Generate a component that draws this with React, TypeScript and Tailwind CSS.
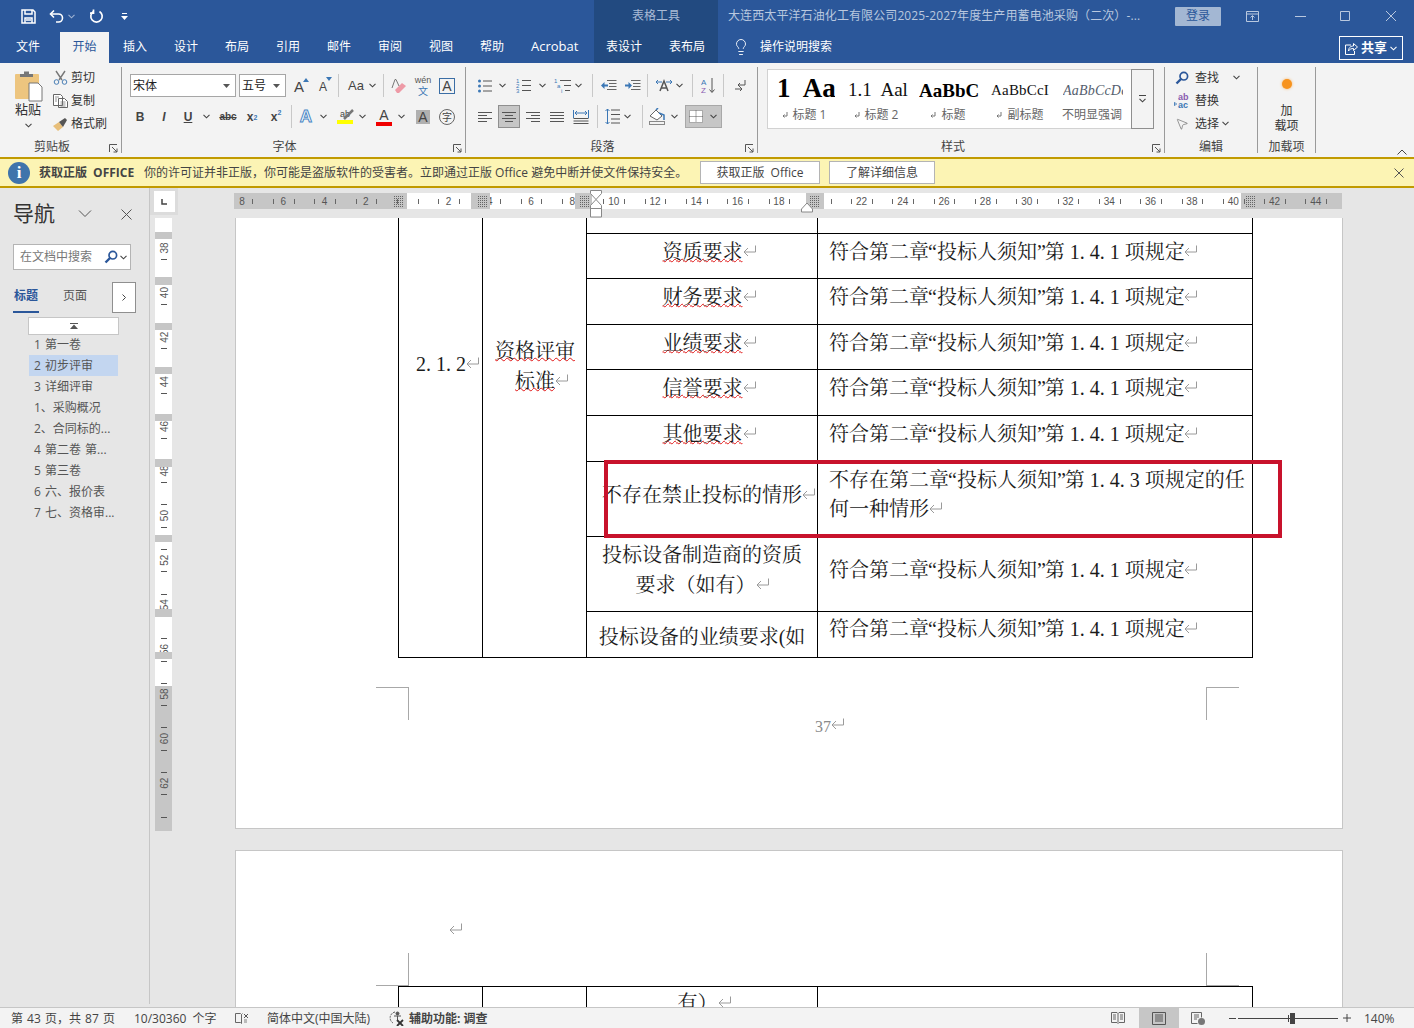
import React from "react";
import { Lightbulb, MousePointer2 } from "lucide-react";

const Chev = ({ c = "#444" }: { c?: string }) => (
  <svg width="7" height="5" viewBox="0 0 7 5" fill="none" stroke={c} strokeWidth="1.1"><path d="M.5 .8 3.500 3.800 6.500 .8" /></svg>
);
const Sep = ({ cls }: { cls: string }) => <div className={`w-px h-[23px] bg-[#c8c8c8] shrink-0 ${cls}`} />;
const Launcher = () => (
  <svg className="absolute right-[3px] bottom-[0px]" width="9" height="9" viewBox="0 0 9 9" fill="none" stroke="#555"><path d="M.5 8V.5H8M3 3l5 5M8 4.500V8H4.500" /></svg>
);
const Mark = ({ cls = "" }: { cls?: string }) => (
  <svg className={`inline-block shrink-0 align-[2px] ${cls}`} width="13" height="12" viewBox="0 0 13 12" fill="none" stroke="#9a9a9a"><path d="M12.500 .5v6.500H1M5 3 1 7l4 4" /></svg>
);
const LinesIcon = ({ w = 14, rows }: { w?: number; rows: [number, number][] }) => (
  <svg width={w} height="12" viewBox={`0 0 ${w} 12`} stroke="#555" strokeWidth="1">
    {rows.map(([a, b], i) => <path key={i} d={`M${a} ${1.5 + i * 3}H${b}`} />)}
  </svg>
);
const BulletIcon = () => (
  <svg width="15" height="14" viewBox="0 0 15 14"><g fill="#3b77b5"><circle cx="1.500" cy="2" r="1.500" /><circle cx="1.500" cy="7" r="1.500" /><circle cx="1.500" cy="12" r="1.500" /></g><path d="M5 2h9M5 7h9M5 12h9" stroke="#555" /></svg>
);
const NumIcon = () => (
  <svg width="16" height="15" viewBox="0 0 16 15"><g fill="#3b77b5" fontSize="6" fontFamily="Liberation Sans"><text x="0" y="5">1</text><text x="0" y="10">2</text><text x="0" y="15">3</text></g><path d="M6 2.500h9M6 7.500h9M6 12.500h9" stroke="#555" /></svg>
);
const MultiIcon = () => (
  <svg width="18" height="15" viewBox="0 0 18 15"><g fill="#3b77b5" fontSize="6" fontFamily="Liberation Sans"><text x="0" y="5">1</text><text x="3" y="10">a</text><text x="7" y="15">i</text></g><path d="M6 2.500h11M10 7.500h7M11 12.500h5" stroke="#555" /></svg>
);
const IndentIcon = ({ flip = false }: { flip?: boolean }) => (
  <svg width="17" height="13" viewBox="0 0 17 13"><path d="M7 1.500h9.500M9 4.500h7.500M9 7.500h7.500M7 10.500h9.500" stroke="#666" /><path d={flip ? "M1 5.500h3.500V3L8 6.500 4.500 10V7.500H1z" : "M8 5.500H4.500V3L1 6.500 4.500 10V7.500H8z"} fill="#3b77b5" /></svg>
);
const Magnifier = ({ size = 14 }: { size?: number }) => (
  <svg width={size} height={size} viewBox="0 0 14 14" fill="none"><circle cx="8.800" cy="5.200" r="3.800" stroke="#2b579a" strokeWidth="1.700" /><path d="M6 8 1.500 12.500" stroke="#2b579a" strokeWidth="2.400" /></svg>
);

function TitleBar() {
  return (
    <div className="h-[32px] flex items-center text-white">
      <svg className="ml-[21px]" width="15" height="15" viewBox="0 0 15 15" fill="none" stroke="#fff" strokeWidth="1.500"><path d="M1 1h11l2 2v11H1z" /><path d="M4 1v4h7V1M4 14V9h7v5" /><path d="M5 11h5" /></svg>
      <svg className="ml-[13px]" width="16" height="15" viewBox="0 0 16 15" fill="none" stroke="#fff" strokeWidth="1.600"><path d="M5 1.500 1.500 5 5 8.500" /><path d="M2 5h7.500a4 4 0 0 1 0 8H7" /></svg>
      <span className="ml-[3px]"><Chev c="#9fb3d3" /></span>
      <svg className="ml-[14px]" width="15" height="15" viewBox="0 0 15 15" fill="none" stroke="#fff" strokeWidth="1.700"><path d="M10.500 2.500a5.700 5.700 0 1 1-6 0" /><path d="M4.500 .5v3.600H1" /></svg>
      <svg className="ml-[17px]" width="7" height="7" viewBox="0 0 7 7" fill="#fff"><path d="M1 0h5v1H1zM0 3h7L3.500 7z" /></svg>
      <div className="ml-[466px] w-[124px] h-[32px] bg-[#224a80] flex items-center justify-center text-[12px] text-[#a9bbd6] pb-[1px]">表格工具</div>
      <div className="ml-[10px] w-[420px] text-[12px] text-[#b9c8df] whitespace-nowrap tracking-[0.1px]">大连西太平洋石油化工有限公司2025-2027年度生产用蓄电池采购（二次）-...</div>
      <div className="ml-[27px] w-[46px] h-[19px] bg-[#a3b7d3] rounded-[1px] text-[#2b579a] text-[12px] flex items-center justify-center">登录</div>
      <svg className="ml-[25px]" width="13" height="11" viewBox="0 0 13 11" fill="none" stroke="#b9c8df"><path d="M.5.5h12v10H.5zM.5 3h12M6.500 9V5M4.500 6.500 6.500 4.500l2 2" /></svg>
      <svg className="ml-[36px]" width="11" height="1" viewBox="0 0 11 1"><path d="M0 .5h11" stroke="#b9c8df" /></svg>
      <svg className="ml-[34px]" width="10" height="10" viewBox="0 0 10 10" fill="none" stroke="#b9c8df"><path d="M.5.5h9v9h-9z" /></svg>
      <svg className="ml-[36px]" width="10" height="10" viewBox="0 0 10 10" fill="none" stroke="#b9c8df"><path d="M0 0l10 10M10 0 0 10" /></svg>
    </div>
  );
}

function TabBar() {
  return (
    <div className="h-[31px] flex items-stretch text-white text-[12px]">
      <div className="ml-[16px] w-[24px] flex items-center pb-[1px]">文件</div>
      <div className="ml-[20px] w-[49px] bg-[#f3f3f3] text-[#2b579a] flex items-center justify-center pb-[1px]">开始</div>
      <div className="ml-[14px] w-[24px] flex items-center pb-[1px]">插入</div>
      <div className="ml-[27px] w-[24px] flex items-center pb-[1px]">设计</div>
      <div className="ml-[27px] w-[24px] flex items-center pb-[1px]">布局</div>
      <div className="ml-[27px] w-[24px] flex items-center pb-[1px]">引用</div>
      <div className="ml-[27px] w-[24px] flex items-center pb-[1px]">邮件</div>
      <div className="ml-[27px] w-[24px] flex items-center pb-[1px]">审阅</div>
      <div className="ml-[27px] w-[24px] flex items-center pb-[1px]">视图</div>
      <div className="ml-[27px] w-[24px] flex items-center pb-[1px]">帮助</div>
      <div className="ml-[27px] w-[46px] flex items-center text-[13px] pb-[1px]">Acrobat</div>
      <div className="ml-[17px] w-[124px] bg-[#224a80] flex items-center pb-[1px]">
        <span className="ml-[12px] w-[63px]">表设计</span><span>表布局</span>
      </div>
      <div className="ml-[14px] w-[20px] flex items-center pb-[1px]"><Lightbulb size={18} strokeWidth={1.2} /></div>
      <div className="ml-[8px] w-[580px] flex items-center pb-[1px]">操作说明搜索</div>
      <div className="-ml-[1px] w-[64px] h-[24px] mt-[4px] border border-white flex items-center justify-center gap-[3px] font-bold text-[13px]">
        <svg width="13" height="13" viewBox="0 0 13 13" fill="none" stroke="#fff"><path d="M6 3H.5v9.500h9V9M3.500 9c0-4 3-5 5-5V1.500l4 3.500-4 3.500V6.500c-2 0-4 .5-5 2.500z" /></svg>
        共享<Chev c="#fff" />
      </div>
    </div>
  );
}

function ClipRow({ icon, label }: { icon: React.ReactNode; label: string }) {
  return (
    <div className="h-[23px] flex items-center">
      <div className="w-[18px] flex justify-start">{icon}</div>
      <span className="text-[12px]">{label}</span>
    </div>
  );
}

function GroupLabel({ children }: { children: React.ReactNode }) {
  return <div className="h-[14px] leading-[16px] text-center text-[12px] text-[#444]">{children}</div>;
}

function Clipboard() {
  return (
    <div className="w-[122px] h-[86px] border-r border-[#9a9a9a] relative flex flex-col shrink-0">
      <div className="h-[72px] flex">
        <div className="ml-[8px] w-[40px] flex flex-col items-center">
          <svg className="mt-[3px]" width="29" height="32" viewBox="0 0 29 32"><rect x="1" y="4" width="24" height="25" rx="1" fill="#edc57f" /><path d="M6 7V4h4V1.500h5V4h4v3z" fill="#777" /><path d="M15 13h9l4 4v14H15z" fill="#fff" stroke="#777" /></svg>
          <span className="text-[13px] leading-[16px] mt-[-1px]">粘贴</span>
          <span className="mt-[6px]"><Chev /></span>
        </div>
        <div className="ml-[5px] mt-[-1px]">
          <ClipRow label="剪切" icon={<svg width="15" height="15" viewBox="0 0 15 15" fill="none"><path d="M3 1l6 9M12 1 6 10" stroke="#777" strokeWidth="1.400" /><circle cx="3.500" cy="12" r="2.300" stroke="#4a7fb5" /><circle cx="11.500" cy="12" r="2.300" stroke="#4a7fb5" /></svg>} />
          <ClipRow label="复制" icon={<svg width="15" height="14" viewBox="0 0 15 14" fill="#fff" stroke="#666"><path d="M.5.500h7l2 2v9h-9zM5.500 4.500h6l3 3v6h-9z" /><path d="M7.500 8h5M7.500 10h5M7.500 12h5M2 3h4M2 5h2M2 7h2" stroke="#777" strokeWidth=".8" /></svg>} />
          <ClipRow label="格式刷" icon={<svg width="16" height="14" viewBox="0 0 16 14"><path d="M0 9l6-4 4 5-5 4z" fill="#e8bf7a" /><path d="M6 5l6-4 2 2-4 7z" fill="#555" /></svg>} />
        </div>
      </div>
      <div className="pr-[17px]"><GroupLabel>剪贴板</GroupLabel></div>
      <Launcher />
    </div>
  );
}

const IBtn = ({ cls, children }: { cls: string; children: React.ReactNode }) => (
  <div className={`h-[23px] flex items-center justify-center shrink-0 ${cls}`}>{children}</div>
);

function FontGroup() {
  return (
    <div className="w-[344px] h-[86px] border-r border-[#9a9a9a] relative flex flex-col shrink-0">
      <div className="h-[72px] pt-[7px] text-[#444]">
        <div className="flex items-center h-[23px]">
          <div className="ml-[8px] w-[106px] h-[23px] bg-white border border-[#a6a6a6] flex items-center justify-between pl-[2px] pr-[5px] text-[12px] text-[#222]">宋体<svg width="7" height="4" viewBox="0 0 7 4" fill="#555"><path d="M0 0h7L3.500 4z" /></svg></div>
          <div className="ml-[3px] w-[47px] h-[23px] bg-white border border-[#a6a6a6] flex items-center justify-between pl-[2px] pr-[5px] text-[12px] text-[#222]">五号<svg width="7" height="4" viewBox="0 0 7 4" fill="#555"><path d="M0 0h7L3.500 4z" /></svg></div>
          <IBtn cls="ml-[1px] w-[24px] text-[14px] [font-family:'Liberation_Sans'] items-end"><span className="relative text-[15px] leading-[20px]">A<svg className="absolute -right-[5px] top-[1px]" width="6" height="4"><path d="M0 4h6L3 0z" fill="#3b77b5" /></svg></span></IBtn>
          <IBtn cls="w-[24px] [font-family:'Liberation_Sans']"><span className="relative text-[12px] leading-[20px] mt-[3px]">A<svg className="absolute -right-[5px] top-[0px]" width="6" height="4"><path d="M0 0h6L3 4z" fill="#3b77b5" /></svg></span></IBtn>
          <Sep cls="ml-[3px]" />
          <IBtn cls="w-[44px] gap-[5px] pl-[2px] text-[13px] [font-family:'Liberation_Sans']">Aa<Chev /></IBtn>
          <Sep cls="" />
          <IBtn cls="ml-[3px] w-[24px]"><svg width="16" height="16" viewBox="0 0 16 16"><path d="M4 12l7-7 4 3-7 7H6z" fill="#ee9aa6" /><path d="M1 10 4 1.500h1L8 8" fill="none" stroke="#777" /></svg></IBtn>
          <IBtn cls="w-[24px] flex-col text-[9px]"><span className="[font-family:'Liberation_Sans'] text-[#555] leading-[11px]">wén</span><span className="text-[#3b77b5] text-[10px] leading-[11px]">文</span></IBtn>
          <IBtn cls="w-[24px]"><div className="w-[16px] h-[16px] border border-[#3b6ea5] flex items-center justify-center text-[14px] leading-none [font-family:'Liberation_Sans']">A</div></IBtn>
        </div>
        <div className="flex items-center h-[23px] mt-[8px] [font-family:'Liberation_Sans']">
          <IBtn cls="ml-[8px] w-[20px] font-bold text-[12px]">B</IBtn>
          <IBtn cls="ml-[2px] w-[24px] italic text-[12px] font-bold">I</IBtn>
          <IBtn cls="w-[24px] underline font-bold text-[12px]">U</IBtn>
          <IBtn cls="w-[12px]"><Chev /></IBtn>
          <IBtn cls="ml-[4px] w-[24px] text-[10px] line-through font-bold">abc</IBtn>
          <IBtn cls="w-[24px] text-[12px] font-bold">x<sub className="text-[7px] text-[#3b77b5]">2</sub></IBtn>
          <IBtn cls="w-[24px] text-[12px] font-bold">x<sup className="text-[7px] text-[#3b77b5]">2</sup></IBtn>
          <Sep cls="ml-[3px]" />
          <IBtn cls="ml-[2px] w-[24px] text-[17px] text-white [-webkit-text-stroke:1px_#4a86c5] font-bold">A</IBtn>
          <IBtn cls="w-[10px]"><Chev /></IBtn>
          <IBtn cls="ml-[5px] w-[24px]"><div className="flex flex-col items-center w-[16px]"><span className="text-[9px] leading-[11px] h-[11px] relative">ab<svg className="absolute left-[3px] top-[0px]" width="12" height="11"><path d="M1 10 10 1" stroke="#777" strokeWidth="2.500" /></svg></span><div className="w-[16px] h-[4px] bg-[#ffff00]" /></div></IBtn>
          <IBtn cls="w-[10px]"><Chev /></IBtn>
          <IBtn cls="ml-[5px] w-[24px]"><div className="flex flex-col items-center w-[16px]"><span className="text-[14px] leading-[14px]">A</span><div className="w-[16px] h-[4px] bg-[#f00000]" /></div></IBtn>
          <IBtn cls="w-[10px]"><Chev /></IBtn>
          <IBtn cls="ml-[5px] w-[24px]"><div className="w-[14px] h-[14px] bg-[#b0b0b0] flex items-center justify-center text-[14px] leading-none">A</div></IBtn>
          <IBtn cls="w-[24px]"><div className="w-[16px] h-[16px] rounded-full border border-[#666] flex items-center justify-center text-[10px] [font-family:'Noto_Sans_CJK_SC']">字</div></IBtn>
        </div>
      </div>
      <div className="pr-[18px]"><GroupLabel>字体</GroupLabel></div>
      <Launcher />
    </div>
  );
}

function ParaGroup() {
  return (
    <div className="w-[292px] h-[86px] border-r border-[#9a9a9a] relative flex flex-col shrink-0">
      <div className="h-[72px] pt-[7px]">
        <div className="flex items-center h-[23px]">
          <IBtn cls="ml-[9px] w-[20px]"><BulletIcon /></IBtn>
          <IBtn cls="ml-[2px] w-[10px]"><Chev /></IBtn>
          <IBtn cls="ml-[5px] w-[24px]"><NumIcon /></IBtn>
          <IBtn cls="ml-[1px] w-[10px]"><Chev /></IBtn>
          <IBtn cls="ml-[6px] w-[20px]"><MultiIcon /></IBtn>
          <IBtn cls="w-[10px]"><Chev /></IBtn>
          <Sep cls="ml-[9px]" />
          <IBtn cls="ml-[3px] w-[24px]"><IndentIcon /></IBtn>
          <IBtn cls="w-[24px]"><IndentIcon flip /></IBtn>
          <Sep cls="ml-[3px]" />
          <IBtn cls="ml-[6px] w-[20px]"><svg width="18" height="15" viewBox="0 0 18 15" fill="none"><path d="M5 13 9 3l4 10M6.500 10h5" stroke="#555" strokeWidth="1.500" /><path d="M1 4h6M3 2 1 4l2 2M17 4h-6M15 2l2 2-2 2" stroke="#3b77b5" /></svg></IBtn>
          <IBtn cls="w-[10px]"><Chev /></IBtn>
          <Sep cls="ml-[8px]" />
          <IBtn cls="ml-[5px] w-[20px]"><svg width="15" height="17" viewBox="0 0 15 17" fill="none"><text x="0" y="8" fontSize="8" fill="#3b77b5" fontFamily="Liberation Sans">A</text><text x="0" y="16" fontSize="8" fill="#8a5bb0" fontFamily="Liberation Sans">Z</text><path d="M11 1v14M8.500 12.500 11 15.500l2.500-3" stroke="#555" /></svg></IBtn>
          <Sep cls="ml-[5px]" />
          <IBtn cls="ml-[6px] w-[20px]"><svg width="11" height="13" viewBox="0 0 11 13" fill="none" stroke="#555"><path d="M10 1v5H3M5 4 3 6l2 2M0 10h7M5 8l2 2-2 2" /></svg></IBtn>
        </div>
        <div className="flex items-center h-[23px] mt-[8px]">
          <IBtn cls="ml-[9px] w-[20px]"><LinesIcon rows={[[0, 14], [0, 9], [0, 14], [0, 9]]} /></IBtn>
          <IBtn cls="ml-[3px] w-[22px] bg-[#c6c6c6] border border-[#8f8f8f]"><LinesIcon rows={[[0, 14], [3, 11], [0, 14], [3, 11]]} /></IBtn>
          <IBtn cls="ml-[2px] w-[22px]"><LinesIcon rows={[[0, 14], [5, 14], [0, 14], [5, 14]]} /></IBtn>
          <IBtn cls="ml-[2px] w-[22px]"><LinesIcon rows={[[0, 14], [0, 14], [0, 14], [0, 14]]} /></IBtn>
          <IBtn cls="ml-[2px] w-[22px]"><svg width="16" height="16" viewBox="0 0 16 16" fill="none"><path d="M.5 1v8M15.500 1v8" stroke="#3b77b5" /><path d="M2 4h12M4 2 2 4l2 2M12 2l2 2-2 2" stroke="#3b77b5" /><path d="M.5 9.500h15M.5 12h15M.5 14.500h15" stroke="#555" /></svg></IBtn>
          <Sep cls="ml-[5px]" />
          <IBtn cls="ml-[4px] w-[20px]"><svg width="15" height="17" viewBox="0 0 15 17" fill="none"><path d="M6 2h9M6 6.500h9M6 11h9M6 15h9" stroke="#555" /><path d="M2.500 1v15M.5 3l2-2 2 2M.5 14l2 2 2-2" stroke="#3b77b5" /></svg></IBtn>
          <IBtn cls="w-[10px]"><Chev /></IBtn>
          <Sep cls="ml-[10px]" />
          <IBtn cls="ml-[4px] w-[20px]"><svg width="17" height="17" viewBox="0 0 17 17" fill="none"><path d="M1 8l6-6 6 6-5 4z" fill="#fff" stroke="#666" /><path d="M7 2 9 0M10 5l5 2v5" stroke="#3b77b5" strokeWidth="1.500" /><rect x=".5" y="13.500" width="15" height="3" stroke="#888" /></svg></IBtn>
          <IBtn cls="ml-[2px] w-[10px]"><Chev /></IBtn>
          <IBtn cls="ml-[6px] w-[37px] bg-[#c6c6c6] border border-[#a8a8a8] gap-[7px] justify-start pl-[3px]"><svg width="14" height="13" viewBox="0 0 14 13"><rect width="14" height="13" fill="#fff" /><path d="M.5.500h13v12H.5zM7 .5v12M.5 6.500h13" fill="none" stroke="#555" strokeDasharray="1 1" /></svg><Chev /></IBtn>
        </div>
      </div>
      <div className="pr-[18px]"><GroupLabel>段落</GroupLabel></div>
      <Launcher />
    </div>
  );
}

function StyleItem({ sample, label, noMark = false }: { sample: React.ReactNode; label: string; noMark?: boolean }) {
  return (
    <div className="w-[72px] h-full flex flex-col overflow-hidden">
      <div className="h-[34px] flex items-center justify-start overflow-hidden [font-family:'Liberation_Serif',serif] whitespace-nowrap">{sample}</div>
      <div className="h-[17px] flex items-center justify-center text-[12px] text-[#666] whitespace-nowrap">
        {!noMark && <svg className="mr-[5px] mt-[2px]" width="6" height="7" viewBox="0 0 6 7" fill="none" stroke="#777"><path d="M5 0v4H1M2.500 2.500 1 4l1.500 1.500" /></svg>}
        {label}
      </div>
    </div>
  );
}

function Styles() {
  return (
    <div className="w-[407px] h-[86px] border-r border-[#9a9a9a] relative flex flex-col shrink-0">
      <div className="h-[72px] pt-[2px] pl-[9px] flex items-start">
        <div className="w-[364px] h-[60px] bg-white border border-[#d2d2d2] border-r-0 pt-[2px] flex overflow-hidden">
          <StyleItem sample={<span className="ml-[9px] mt-[-3px] w-[58px] overflow-hidden text-[27px] leading-[34px] font-bold text-black [word-spacing:7px]">1 Aa</span>} label="标题 1" />
          <StyleItem sample={<span className="ml-[8px] mt-[2px] w-[60px] overflow-hidden text-[19px] text-[#111] [word-spacing:5px]">1.1 Aal</span>} label="标题 2" />
          <StyleItem sample={<span className="ml-[7px] mt-[4px] w-[60px] overflow-hidden text-[19px] font-bold text-black">AaBbCc</span>} label="标题" />
          <StyleItem sample={<span className="ml-[7px] mt-[3px] w-[60px] overflow-hidden text-[15px] text-[#111] tracking-[0.2px]">AaBbCcI</span>} label="副标题" />
          <StyleItem noMark sample={<span className="ml-[7px] mt-[3px] w-[60px] overflow-hidden text-[14px] italic text-[#55606e] tracking-[0.2px]">AaBbCcDd</span>} label="不明显强调" />
        </div>
        <div className="w-[23px] h-[60px] border border-[#8f8f8f] flex flex-col items-center justify-center gap-[2px]">
          <div className="w-[7px] h-px bg-[#444]" /><Chev />
        </div>
      </div>
      <div className="pr-[16px]"><GroupLabel>样式</GroupLabel></div>
      <Launcher />
    </div>
  );
}

function EditRow({ icon, label, chev }: { icon: React.ReactNode; label: string; chev: string }) {
  return (
    <div className="h-[23px] flex items-center">
      <div className="w-[17px] flex justify-center">{icon}</div>
      <span className="ml-[5px] text-[12px]">{label}</span>
      <span className={chev}><Chev /></span>
    </div>
  );
}

function Editing() {
  return (
    <div className="w-[93px] h-[86px] border-r border-[#9a9a9a] flex flex-col shrink-0">
      <div className="h-[72px] pl-[8px]">
        <div className="mt-[-1px]">
          <EditRow label="查找" chev="ml-[14px]" icon={<Magnifier />} />
          <EditRow label="替换" chev="hidden" icon={<svg width="16" height="16" viewBox="0 0 16 16"><text x="4" y="7" fontSize="9" fill="#8a5bb0" fontFamily="Liberation Sans" fontWeight="bold">ab</text><text x="4" y="15" fontSize="9" fill="#3b77b5" fontFamily="Liberation Sans" fontWeight="bold">ac</text><path d="M0 11h3M1 9 0 11l1 2" stroke="#3b77b5" fill="none" /></svg>} />
          <EditRow label="选择" chev="ml-[3px]" icon={<MousePointer2 size={14} strokeWidth={1} color="#555" />} />
        </div>
      </div>
      <GroupLabel>编辑</GroupLabel>
    </div>
  );
}

function Addins() {
  return (
    <div className="w-[58px] h-[86px] border-r border-[#9a9a9a] flex flex-col shrink-0">
      <div className="h-[72px] flex flex-col items-center text-[12px] leading-[15px]">
        <div className="mt-[12px] w-[10px] h-[10px] rounded-full bg-[#f7931e] shadow-[0_0_3px_#f7b56a]" />
        <span className="mt-[14px]">加</span>
        <span>载项</span>
      </div>
      <GroupLabel>加载项</GroupLabel>
    </div>
  );
}

function Ribbon() {
  return (
    <div className="h-[94px] bg-[#f3f3f3] pt-[4px] flex relative text-[#333]">
      <Clipboard />
      <FontGroup />
      <ParaGroup />
      <Styles />
      <Editing />
      <Addins />
      <svg className="absolute right-[7px] bottom-[2px]" width="10" height="6" viewBox="0 0 10 6" fill="none" stroke="#444"><path d="M.5 5.500 5 1l4.500 4.500" /></svg>
    </div>
  );
}

function Notice() {
  return (
    <div className="h-[31px] bg-[#fcf4b4] border-t-2 border-b-2 border-[#c19a00] flex items-center text-[12px] text-[#444]">
      <div className="ml-[8px] w-[22px] h-[22px] rounded-full bg-[#3f74ab] flex items-center justify-center text-white font-bold text-[17px] [font-family:'Liberation_Serif']">i</div>
      <span className="ml-[9px] w-[95px] font-bold whitespace-nowrap [word-spacing:3px]">获取正版 OFFICE</span>
      <span className="ml-[10px] w-[556px] whitespace-nowrap">你的许可证并非正版，你可能是盗版软件的受害者。立即通过正版 Office 避免中断并使文件保持安全。</span>
      <div className="w-[120px] h-[23px] bg-white border border-[#b4b4b4] flex items-center justify-center [word-spacing:3px]">获取正版 Office</div>
      <div className="ml-[9px] w-[106px] h-[23px] bg-white border border-[#b4b4b4] flex items-center justify-center">了解详细信息</div>
      <svg className="ml-[459px]" width="10" height="10" viewBox="0 0 10 10" stroke="#555"><path d="M.5.500l9 9M9.500.500l-9 9" /></svg>
    </div>
  );
}

const NAV = ["1 第一卷", "2 初步评审", "3 详细评审", "1、采购概况", "2、合同标的...", "4 第二卷 第...", "5 第三卷", "6 六、报价表", "7 七、资格审..."];

function NavPane() {
  return (
    <div className="w-[150px] shrink-0 bg-[#e6e6e6] border-r border-[#c6c6c6] mb-[3px] text-[#555]">
      <div className="h-[52px] flex items-center">
        <span className="ml-[13px] text-[21px] text-[#333] w-[43px]">导航</span>
        <svg className="ml-[22px]" width="14" height="8" viewBox="0 0 14 8" fill="none" stroke="#555"><path d="M1 .5l6 6 6-6" /></svg>
        <svg className="ml-[29px]" width="11" height="11" viewBox="0 0 11 11" stroke="#555"><path d="M.5.500l10 10M10.500.5l-10 10" /></svg>
      </div>
      <div className="ml-[13px] w-[118px] h-[26px] mt-[4px] bg-white border border-[#b4b4b4] flex items-center pl-[6px] text-[12px] text-[#777]">
        <span className="w-[72px] whitespace-nowrap">在文档中搜索</span>
        <span className="ml-[12px]"><Magnifier size={14} /></span>
        <span className="ml-[2px]"><Chev /></span>
      </div>
      <div className="flex h-[31px] mt-[12px] text-[12px]">
        <div className="ml-[13px] w-[26px] h-[31px] border-b-[2px] border-[#2b579a] text-[#2b579a] font-bold flex items-start justify-center pt-[5px]">标题</div>
        <div className="ml-[24px] w-[24px] pt-[5px]">页面</div>
        <div className="ml-[25px] w-[24px] h-[31px] bg-white border border-[#8f8f8f] flex items-center justify-center">
          <svg width="4" height="7" viewBox="0 0 4 7" fill="none" stroke="#444"><path d="M.5.5l3 3-3 3" /></svg>
        </div>
      </div>
      <div className="ml-[28px] w-[91px] h-[18px] mt-[4px] bg-white border border-[#c6c6c6] flex items-center justify-center">
        <svg width="8" height="6" viewBox="0 0 8 6" fill="#555"><path d="M0 0h8v1H0zM4 1.500 8 6H0z" /></svg>
      </div>
      <div className="mt-[-1px] text-[12px] [word-spacing:1px]">
        {NAV.map((t) => (
          <div key={t} className={`ml-[29px] w-[89px] h-[21px] pl-[5px] flex items-center whitespace-nowrap ${t === "2 初步评审" ? "bg-[#c3d6f0]" : ""}`}>{t}</div>
        ))}
      </div>
    </div>
  );
}

function HRuler() {
  const x = (n: number) => 173.2 + n * 20.65;
  const nums = [-8, -6, -4, -2, 2, 4, 6, 8, 10, 12, 14, 16, 18, 22, 24, 26, 28, 30, 32, 34, 36, 38, 40, 42, 44];
  const ticks: number[] = [];
  for (let n = -8; n <= 44; n += 2) { if (n !== -8) ticks.push(x(n - 0.5)); ticks.push(x(n + 0.5)); }
  const grays: [number, number][] = [[237, 256], [341, 358], [572, 590]];
  const gutters = [159, 243, 346, 576, 1012];
  return (
    <svg width="1108" height="30" viewBox="0 0 1108 30" className="shrink-0 overflow-visible">
      <defs>
        <pattern id="hatch" width="2" height="2" patternUnits="userSpaceOnUse"><rect width="1" height="1" fill="#666" /></pattern>
      </defs>
      <rect x="0" y="5" width="1108" height="16" fill="#fff" />
      <rect x="0" y="5" width="173" height="16" fill="#c6c6c6" />
      <rect x="1007" y="5" width="101" height="16" fill="#c6c6c6" />
      <g fill="#555" fontFamily="Liberation Sans" fontSize="10" textAnchor="middle">
        {nums.map((n) => <text key={n} x={x(n)} y="16.500">{Math.abs(n)}</text>)}
      </g>
      {ticks.map((t, i) => <path key={i} d={`M${Math.round(t) + 0.5} 11v5`} stroke="#666" />)}
      {grays.map(([a, b]) => <rect key={a} x={a} y="5" width={b - a} height="16" fill="#c6c6c6" />)}
      {gutters.map((g) => <rect key={g} x={g} y="8" width="10" height="11" fill="url(#hatch)" />)}
      <path d="M356.500 2.500h11v3l-5.500 6 5.500 6v3h-11v-3l5.500-6-5.500-6zM356.500 20.500h11v8.500h-11z" fill="#fff" stroke="#888" />
      <path d="M567.500 21l5.500-6 5.500 6v3h-11z" fill="#fff" stroke="#888" />
    </svg>
  );
}

function VRuler() {
  const y = (n: number) => 30 + (n - 38) * 22.3;
  const nums = [38, 40, 42, 44, 46, 48, 50, 52, 54, 56, 58, 60, 62];
  const ticks: number[] = [];
  nums.forEach((n) => { ticks.push(y(n) - 11.2, y(n) + 11.2); });
  ticks.push(y(64) - 11.2);
  const bands: [number, number][] = [[14, 21], [59, 67], [105, 112], [149, 156], [196, 203], [241, 249], [317, 324], [391, 399], [434, 441]];
  return (
    <svg width="17" height="613" viewBox="0 0 17 613" className="shrink-0">
      <rect width="17" height="613" fill="#fff" />
      <rect y="468" width="17" height="145" fill="#c6c6c6" />
      <g fill="#555" fontFamily="Liberation Sans" fontSize="10" textAnchor="middle">
        {nums.map((n) => <text key={n} transform={`translate(12.500 ${y(n)}) rotate(-90)`}>{n}</text>)}
      </g>
      {ticks.map((t, i) => <path key={i} d={`M6 ${Math.round(t) + 0.5}h6`} stroke="#555" />)}
      {bands.map(([a, b]) => <rect key={a} y={a} width="17" height={b - a} fill="#c6c6c6" />)}
    </svg>
  );
}

const DOC = "[font-family:'Liberation_Serif','Noto_Serif_CJK_SC','Noto_Sans_CJK_SC',serif] text-[20px] leading-[30px] text-[#1a1a1a]";
const WAVY = "underline decoration-wavy decoration-[#e01818] decoration-1 underline-offset-[-1px] [text-decoration-skip-ink:none]";

const Req = () => (
  <span className="whitespace-nowrap">符合第二章<span className="-ml-[1px]">“</span>投标人须知<span className="-mr-[1px]">”</span>第 1. 4. 1 项规定<Mark cls="-ml-[1px]" /></span>
);

function Wavy({ t }: { t: string }) {
  return <span className="whitespace-nowrap pl-[1px]"><span className={WAVY}>{t}</span><Mark cls="-mr-[13px]" /></span>;
}

function Table() {
  return (
    <div className={`ml-[162px] w-[855px] flex h-[440px] border-b border-black ${DOC}`}>
      <div className="w-[84px] border-l border-black pl-[17px] pt-[131px] whitespace-nowrap">2. 1. 2<Mark /></div>
      <div className="w-[104px] border-l border-black pt-[118px] pl-[1px] text-center"><span className={WAVY}>资格评审</span><br /><span className={WAVY}>标准</span><Mark cls="-mr-[13px]" /></div>
      <div className="w-[667px] flex flex-col">
        <div className="h-[15px] flex"><div className="w-[231px] border-l border-black" /><div className="flex-1 border-l border-r border-black" /></div>
        {["资质要求", "财务要求", "业绩要求", "信誉要求", "其他要求"].map((t, i) => (
          <div key={t} className={`flex border-t border-black ${i === 0 || i === 2 ? "h-[45px]" : "h-[46px]"}`}>
            <div className="w-[231px] border-l border-black flex justify-center items-start pt-[3px]"><Wavy t={t} /></div>
            <div className="flex-1 border-l border-r border-black pl-[11px] flex items-start pt-[3px]"><Req /></div>
          </div>
        ))}
        <div className="flex border-t border-black h-[75px]">
          <div className="w-[231px] border-l border-black flex justify-center items-start pt-[18px]"><span className="whitespace-nowrap">不存在禁止投标的情形<Mark cls="-mr-[13px]" /></span></div>
          <div className="flex-1 border-l border-r border-black pl-[11px] pt-[3px] flex flex-col">
            <div className="whitespace-nowrap">不存在第二章<span className="-ml-[1px]">“</span>投标人须知<span className="-mr-[1px]">”</span>第 1. 4. 3 项规定的任</div>
            <div className="mt-[-1px]">何一种情形<Mark /></div>
          </div>
        </div>
        <div className="flex border-t border-black h-[75px]">
          <div className="w-[231px] border-l border-black text-center pt-[3px]">投标设备制造商的资质<br />要求（如有）<Mark /></div>
          <div className="flex-1 border-l border-r border-black pl-[11px] flex items-start pt-[18px]"><Req /></div>
        </div>
        <div className="flex border-t border-black flex-1">
          <div className="w-[231px] border-l border-black flex justify-center items-start whitespace-nowrap pt-[10px]">投标设备的业绩要求(如</div>
          <div className="flex-1 border-l border-r border-black pl-[11px] flex items-start pt-[2px]"><Req /></div>
        </div>
      </div>
    </div>
  );
}

function Page1() {
  return (
    <div className="relative w-[1108px] h-[611px] bg-white border-l border-r border-b border-[#c6c6c6] shrink-0 overflow-hidden">
      <Table />
      <div className="ml-[140px] mt-[29px] w-[863px] flex justify-between">
        <div className="w-[33px] h-[33px] border-t border-r border-[#a8a8a8]" />
        <div className="w-[33px] h-[33px] border-t border-l border-[#a8a8a8]" />
      </div>
      <div className={`ml-[579px] mt-[-8px] !text-[16px] ${DOC} !text-[#8a8a8a]`}>37<Mark /></div>
      <div className="absolute left-[368px] top-[242px] w-[678px] h-[78px] border-[4px] border-[#c8122c]" />
    </div>
  );
}

function Page2() {
  return (
    <div className="w-[1108px] h-[200px] bg-white border border-[#c6c6c6] shrink-0">
      <div className="ml-[213px] mt-[72px] h-[14px] flex"><Mark /></div>
      <div className="ml-[140px] mt-[16px] w-[863px] flex justify-between">
        <div className="w-[33px] h-[33px] border-b border-r border-[#a8a8a8]" />
        <div className="w-[33px] h-[33px] border-b border-l border-[#a8a8a8]" />
      </div>
      <div className={`ml-[162px] w-[855px] h-[60px] flex border-t border-black ${DOC}`}>
        <div className="w-[84px] border-l border-black" />
        <div className="w-[104px] border-l border-black" />
        <div className="w-[231px] border-l border-black text-center pt-[1px] pl-[4px]">有）<Mark /></div>
        <div className="w-[436px] border-l border-r border-black" />
      </div>
    </div>
  );
}

function StatusBar() {
  return (
    <div className="h-[21px] bg-[#f3f3f3] border-t border-[#c6c6c6] flex items-center text-[12px] text-[#444] relative">
      <span className="ml-[11px] w-[104px] whitespace-nowrap pt-[1px] [word-spacing:1px]">第 43 页，共 87 页</span>
      <span className="ml-[19px] w-[82px] whitespace-nowrap pt-[1px] [word-spacing:3px]">10/30360 个字</span>
      <svg className="ml-[19px]" width="14" height="13" viewBox="0 0 14 13" fill="none" stroke="#666"><path d="M.5 1.500h5l1 1v9l-1-1h-5zM6.500 2.500l1-1" /><path d="M9 2l4 4M13 2 9 6" stroke="#555" /><path d="M9 8h3M9 10h3" strokeWidth=".8" /></svg>
      <span className="ml-[18px] w-[103px] whitespace-nowrap pt-[1px]">简体中文(中国大陆)</span>
      <svg className="ml-[19px]" width="16" height="15" viewBox="0 0 16 15" fill="none" stroke="#555"><path d="M6 1a6 6 0 0 0-2 11" strokeDasharray="2 1" /><circle cx="8.500" cy="2.500" r="1.500" fill="#555" /><path d="M5 5h7M8.500 5v4" /><path d="M8 9l6 6M14 9l-6 6" strokeWidth="1.800" stroke="#333" /></svg>
      <span className="ml-[4px] font-bold whitespace-nowrap w-[79px] pt-[1px]">辅助功能: 调查</span>
      <svg className="ml-[623px]" width="14" height="12" viewBox="0 0 14 12" fill="none" stroke="#666"><path d="M.5.500h5.500l1 1 1-1h5.500v10H8l-1 1-1-1H.5zM7 1.500v9M2 3h3M2 5h3M2 7h3M9 3h3M9 5h3M9 7h3" /></svg>
      <div className="ml-[14px] w-[40px] h-[20px] bg-[#c6c6c6] flex items-center justify-center">
        <svg width="14" height="13" viewBox="0 0 14 13" fill="none" stroke="#555"><path d="M.5.500h13v12H.5zM3 3h8M3 5h8M3 7h8M3 9h8" /></svg>
      </div>
      <svg className="ml-[12px]" width="14" height="13" viewBox="0 0 14 13" fill="none" stroke="#666"><path d="M.5.500h10v5M.5.500v11h6M3 3h5M3 5h5M3 7h3" /><circle cx="10.500" cy="9.500" r="3.500" fill="#777" stroke="none" /></svg>
      <div className="ml-[24px] w-[7px] h-px bg-[#444]" />
      <div className="ml-[2px] w-[100px] h-px bg-[#444] relative">
        <div className="absolute left-[50px] top-[-3px] w-px h-[7px] bg-[#444]" />
        <div className="absolute left-[52px] top-[-5px] w-[5px] h-[11px] bg-[#444]" />
      </div>
      <svg className="ml-[5px]" width="8" height="8" viewBox="0 0 8 8" stroke="#444"><path d="M0 4h8M4 0v8" /></svg>
      <span className="ml-[13px] whitespace-nowrap pt-[1px]">140%</span>
    </div>
  );
}

export default function App() {
  return (
    <div className="w-[1414px] h-[1028px] flex flex-col overflow-hidden bg-[#e6e6e6] [font-family:'Open_Sans','Noto_Sans_CJK_SC',sans-serif]">
      <div className="bg-[#2b579a]">
        <TitleBar />
        <TabBar />
      </div>
      <Ribbon />
      <Notice />
      <div className="flex-1 flex min-h-0">
        <NavPane />
        <div className="flex-1 flex flex-col min-w-0">
          <div className="h-[30px] flex shrink-0">
            <div className="w-[28px] h-[27px] bg-[#dcdcdc] flex items-center justify-center">
              <div className="w-[21px] h-[21px] bg-white flex items-center justify-center">
                <svg width="6" height="6" viewBox="0 0 6 6" fill="none" stroke="#444" strokeWidth="1.500"><path d="M1 0v5h5" /></svg>
              </div>
            </div>
            <div className="ml-[56px]"><HRuler /></div>
          </div>
          <div className="flex-1 flex min-h-0 overflow-hidden">
            <div className="ml-[5px] w-[80px] shrink-0"><VRuler /></div>
            <div className="flex flex-col gap-[21px]">
              <Page1 />
              <Page2 />
            </div>
          </div>
        </div>
      </div>
      <StatusBar />
    </div>
  );
}
